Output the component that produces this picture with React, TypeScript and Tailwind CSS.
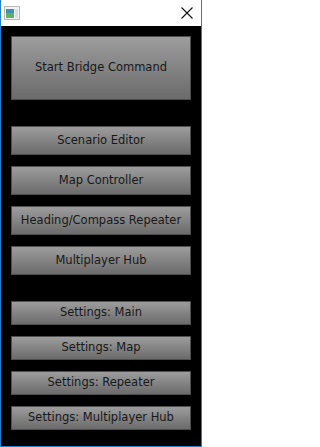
import React from 'react';

const launchers = ["Scenario Editor", "Map Controller", "Heading/Compass Repeater", "Multiplayer Hub"];
const settings = ["Settings: Main", "Settings: Map", "Settings: Repeater", "Settings: Multiplayer Hub"];

const btn =
  "w-full flex items-center justify-center border border-[#4f4f4f] bg-gradient-to-b from-[#9d9d9d] to-[#6b6b6b] text-[#181818] text-[11.5px] leading-none";

const App: React.FC = () => {
  return (
    <div className="w-[202px] h-[447px] flex flex-col bg-black border-x border-b border-[#1883d7] font-['DejaVu_Sans',sans-serif]">
      {/* title bar */}
      <div className="h-[26px] bg-white flex items-center justify-between pl-[3px] pr-[7px] shrink-0">
        <svg width="16" height="14" viewBox="0 0 16 14">
          <rect x="0.5" y="0.5" width="15" height="13" fill="#f4f4f4" stroke="#b8b8b8" />
          <rect x="2" y="3" width="8" height="9" fill="#3f8fb0" />
          <rect x="2" y="7" width="8" height="5" fill="#5fae6a" />
          <rect x="11" y="3" width="3" height="9" fill="#d6dfe6" />
        </svg>
        <svg width="14" height="14" viewBox="0 0 14 14">
          <path d="M1.5 1.5 L12.5 12.5 M12.5 1.5 L1.5 12.5" stroke="#111" strokeWidth="1.1" />
        </svg>
      </div>

      <div className="flex flex-col px-[10px] pt-[10px]">
        <button className={btn + " h-[64px]"}>Start Bridge Command</button>

        <div className="flex flex-col gap-[11px] mt-[26px]">
          {launchers.map((label) => (
            <button key={label} className={btn + " h-[29px]"}>
              {label}
            </button>
          ))}
        </div>

        <div className="flex flex-col gap-[11px] mt-[26px]">
          {settings.map((label) => (
            <button key={label} className={btn + " h-[24px]"}>
              {label}
            </button>
          ))}
        </div>
      </div>
    </div>
  );
};

export default App;
